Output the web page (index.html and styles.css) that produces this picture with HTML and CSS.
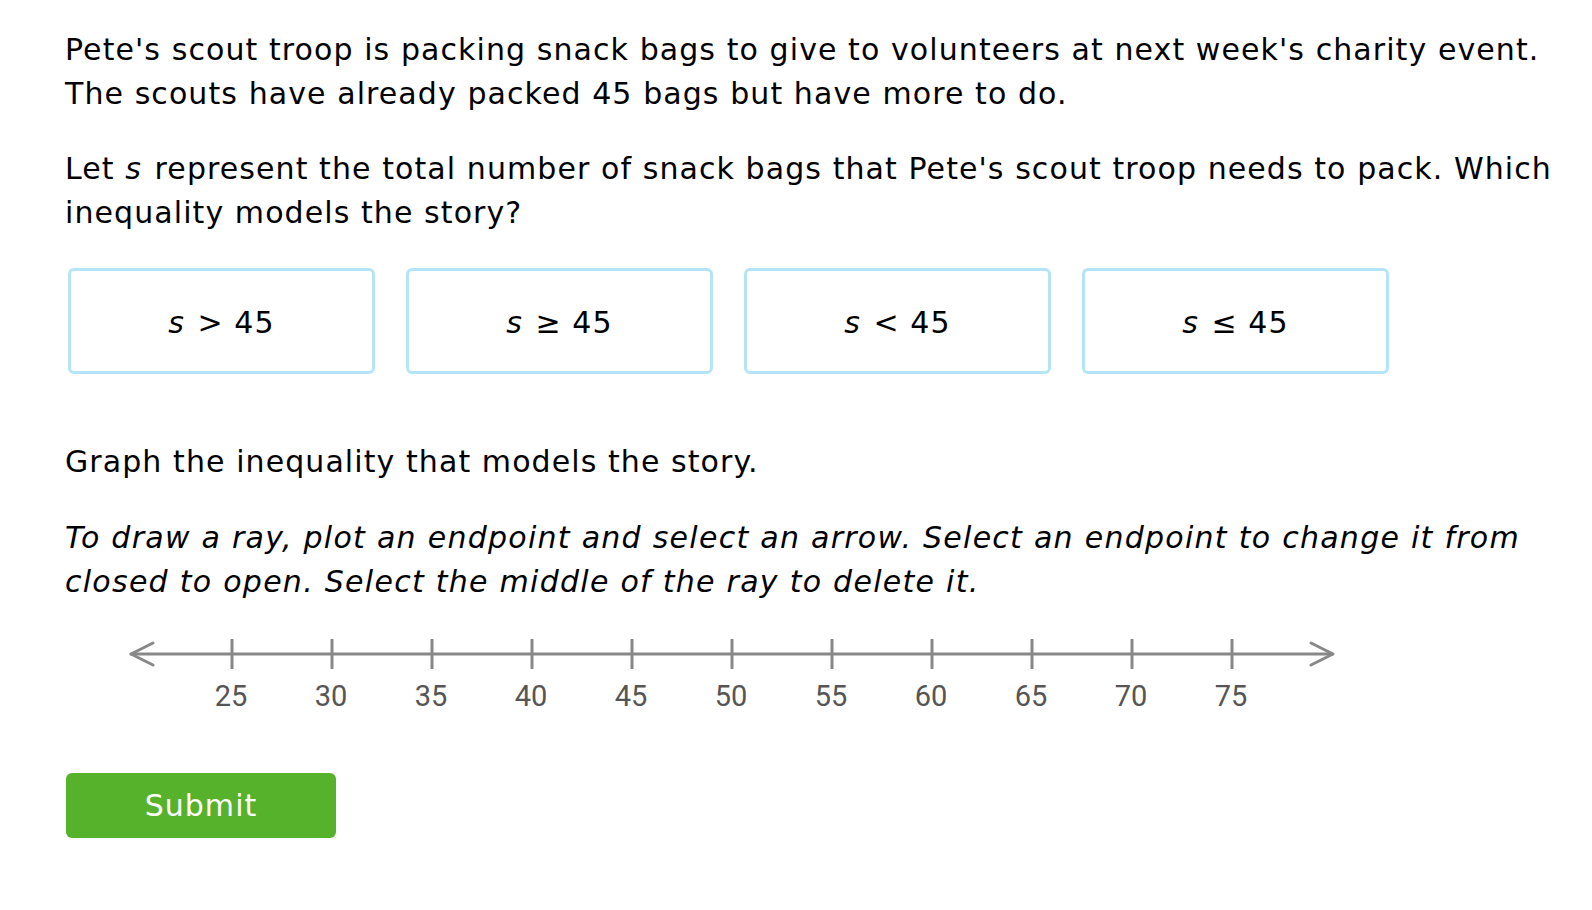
FILE: index.html
```html
<!DOCTYPE html>
<html>
<head>
<meta charset="utf-8">
<link rel="stylesheet" href="styles.css">
</head>
<body>
<main class="question">
  <p class="text">Pete's scout troop is packing snack bags to give to volunteers at next week's charity event. The scouts have already packed 45 bags but have more to do.</p>
  <p class="text gap">Let <i class="var">s</i> represent the total number of snack bags that Pete's scout troop needs to pack. Which inequality models the story?</p>
  <div class="choices">
    <div class="choice"><i class="var">s</i>&nbsp;&gt;&nbsp;45</div>
    <div class="choice"><i class="var">s</i>&nbsp;≥&nbsp;45</div>
    <div class="choice"><i class="var">s</i>&nbsp;&lt;&nbsp;45</div>
    <div class="choice"><i class="var">s</i>&nbsp;≤&nbsp;45</div>
  </div>
  <p class="text graph-prompt">Graph the inequality that models the story.</p>
  <p class="text instructions">To draw a ray, plot an endpoint and select an arrow. Select an endpoint to change it from closed to open. Select the middle of the ray to delete it.</p>
  <svg class="numline" width="1290" height="100" viewBox="0 0 1290 100">
    <g stroke="#888" stroke-width="3" fill="none" stroke-linecap="round" stroke-linejoin="round">
      <line x1="66" y1="33" x2="1267" y2="33"/>
      <polyline points="88,22 66,33 88,44"/>
      <polyline points="1246,22 1268,33 1246,44"/>
      <line x1="167" y1="18" x2="167" y2="48" stroke-linecap="butt"/>
      <line x1="267" y1="18" x2="267" y2="48" stroke-linecap="butt"/>
      <line x1="367" y1="18" x2="367" y2="48" stroke-linecap="butt"/>
      <line x1="467" y1="18" x2="467" y2="48" stroke-linecap="butt"/>
      <line x1="567" y1="18" x2="567" y2="48" stroke-linecap="butt"/>
      <line x1="667" y1="18" x2="667" y2="48" stroke-linecap="butt"/>
      <line x1="767" y1="18" x2="767" y2="48" stroke-linecap="butt"/>
      <line x1="867" y1="18" x2="867" y2="48" stroke-linecap="butt"/>
      <line x1="967" y1="18" x2="967" y2="48" stroke-linecap="butt"/>
      <line x1="1067" y1="18" x2="1067" y2="48" stroke-linecap="butt"/>
      <line x1="1167" y1="18" x2="1167" y2="48" stroke-linecap="butt"/>
    </g>
    <g class="labels" text-anchor="middle">
      <text x="166" y="85">25</text>
      <text x="266" y="85">30</text>
      <text x="366" y="85">35</text>
      <text x="466" y="85">40</text>
      <text x="566" y="85">45</text>
      <text x="666" y="85">50</text>
      <text x="766" y="85">55</text>
      <text x="866" y="85">60</text>
      <text x="966" y="85">65</text>
      <text x="1066" y="85">70</text>
      <text x="1166" y="85">75</text>
    </g>
  </svg>
  <button class="submit">Submit</button>
</main>
</body>
</html>
```
FILE: styles.css
```css
html, body {
  margin: 0;
  padding: 0;
  background: #fff;
}
body {
  font-family: "DejaVu Sans", Verdana, sans-serif;
  color: #000;
}
.question {
  padding: 28px 0 0 65px;
  width: 1495px;
}
.text {
  margin: 0;
  font-size: 30px;
  letter-spacing: 1.08px;
  line-height: 44px;
}
.var {
  padding-right: 2px;
}
.gap {
  margin-top: 31px;
}
.choices {
  display: flex;
  gap: 31px;
  margin-top: 33px;
  margin-left: 3px;
}
.choice {
  width: 307px;
  height: 106px;
  box-sizing: border-box;
  border: 3px solid #b4e4f8;
  border-radius: 6px;
  display: flex;
  align-items: center;
  justify-content: center;
  font-size: 30px;
  letter-spacing: 1.05px;
  padding-top: 2px;
}
.graph-prompt {
  margin-top: 66px;
}
.instructions {
  margin-top: 32px;
  font-style: italic;
  letter-spacing: 1.27px;
}
.numline {
  display: block;
  margin-top: 17px;
}
.labels {
  font-family: Roboto, "Liberation Sans", sans-serif;
  font-size: 29px;
  fill: #555;
}
.submit {
  display: block;
  margin-top: 52px;
  margin-left: 1px;
  width: 270px;
  height: 65px;
  border: none;
  border-radius: 6px;
  background: #57b22b;
  color: #fff;
  font-family: "DejaVu Sans", Verdana, sans-serif;
  font-size: 30px;
  letter-spacing: 1.05px;
  padding: 0;
}
```
